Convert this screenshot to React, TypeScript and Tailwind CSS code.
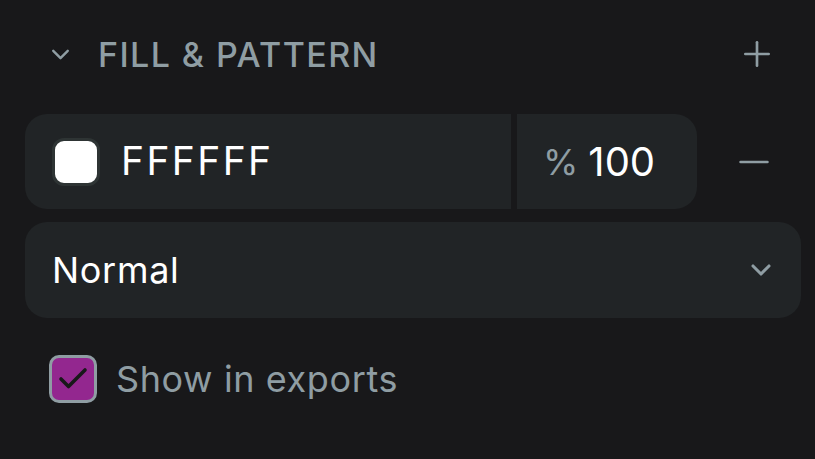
import { Check, ChevronDown, Minus, Plus } from "lucide-react";

const font = { fontFamily: "Inter, 'Noto Sans', sans-serif" };

export default function App() {
  return (
    <div className="w-[815px] h-[459px] bg-[#18181a] overflow-hidden" style={font}>
      {/* header */}
      <div className="flex h-[108px] items-center pl-[46px] pr-[38px]">
        <ChevronDown className="h-[29px] w-[29px] text-[#8f9da3]" strokeWidth={2} />
        <span className="ml-[23px] text-[34px] font-medium uppercase tracking-[1.4px] text-[#8f9da3]">
          Fill &amp; Pattern
        </span>
        <button type="button" className="ml-auto flex h-[40px] w-[40px] items-center justify-center text-[#8f9da3]">
          <Plus className="h-[42px] w-[42px]" strokeWidth={1.6} />
        </button>
      </div>

      {/* color row */}
      <div className="mt-[6px] flex items-center pl-[25px]">
        <div className="flex h-[95px] w-[486px] items-center rounded-l-[22px] bg-[#212426] pl-[27px]">
          <span className="h-[48px] w-[48px] rounded-[12px] border-[3px] border-[#2e3434] bg-white" />
          <span className="ml-[21px] text-[39px] tracking-[2.4px] text-white">FFFFFF</span>
        </div>
        <div className="ml-[6px] flex h-[95px] w-[180px] items-center rounded-r-[22px] bg-[#212426] pl-[26px]">
          <span className="text-[36px] text-[#8f9da3]">%</span>
          <span className="ml-[10px] text-[40px] text-white">100</span>
        </div>
        <button type="button" className="ml-[34px] flex h-[40px] w-[46px] items-center justify-center text-[#8f9da3]">
          <Minus className="h-[50px] w-[50px]" strokeWidth={1.4} />
        </button>
      </div>

      {/* blend select */}
      <div className="ml-[25px] mt-[13px] flex h-[96px] w-[776px] items-center justify-between rounded-[22px] bg-[#212426] pl-[27px] pr-[24px]">
        <span className="text-[36px] tracking-[0.7px] text-white">Normal</span>
        <ChevronDown className="h-[32px] w-[32px] text-[#8f9da3]" strokeWidth={2.3} />
      </div>

      {/* show in exports */}
      <label className="ml-[49px] mt-[34px] flex items-center">
        <span className="flex h-[48px] w-[48px] items-center justify-center rounded-[10px] border-[3px] border-[#8f9da3] bg-[#93278f]">
          <Check className="h-[36px] w-[36px] text-[#18181a]" strokeWidth={2.4} />
        </span>
        <span className="ml-[19px] text-[36px] tracking-[0.6px] text-[#8f9da3]">Show in exports</span>
      </label>
    </div>
  );
}
